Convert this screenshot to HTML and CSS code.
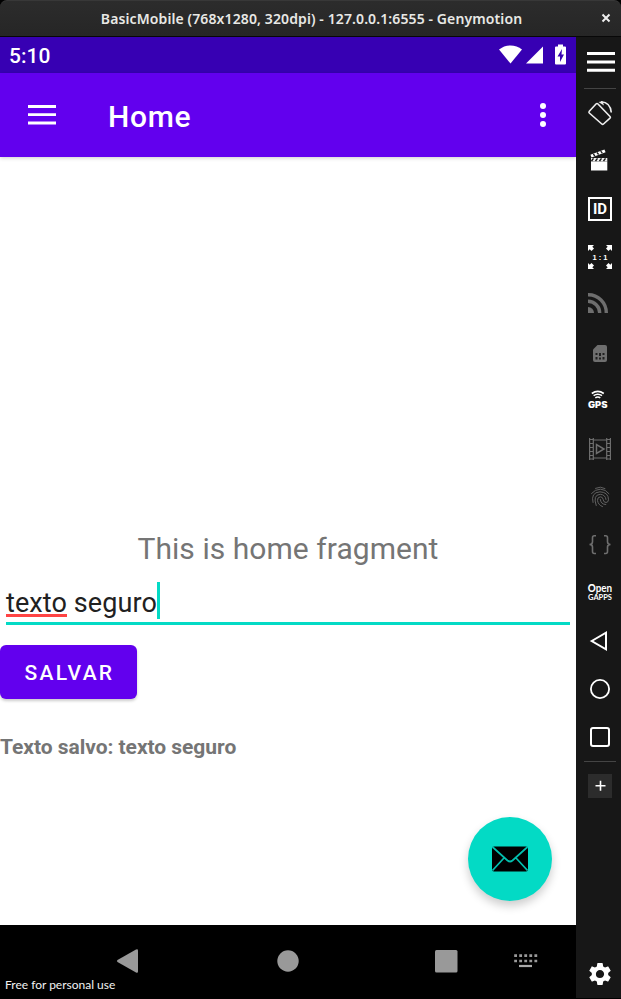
FILE: index.html
```html
<!DOCTYPE html>
<html lang="pt">
<head>
<meta charset="utf-8">
<title>BasicMobile</title>
<link rel="stylesheet" href="styles.css">
</head>
<body>
<div class="window">
  <header class="titlebar">
    <span class="window-title">BasicMobile (768x1280, 320dpi) - 127.0.0.1:6555 - Genymotion</span>
    <svg class="close" viewBox="0 0 10 10"><path d="M1.500 1.500l7 7M8.500 1.500l-7 7"/></svg>
  </header>
  <div class="workspace">
    <div class="device">
      <div class="statusbar">
        <span class="clock">5:10</span>
        <svg class="status-icons" width="70" height="22" viewBox="0 0 70 22">
          <path d="M1 5.500C7.500 0 17.500 0 24 5.500L12.500 19.500z"/>
          <path d="M28 19.500L45 2.500V19.500z"/>
          <path fill-rule="evenodd" d="M60 0.500h5v2h2q1 0 1 1v16q0 1-1 1h-9q-1 0-1-1v-16q0-1 1-1h2zM64 5l-4.500 7.500h2.500v5.500l4-7.500h-2.500z"/>
        </svg>
      </div>
      <div class="appbar">
        <svg class="menu" width="28" height="20" viewBox="0 0 28 20"><path d="M0 1.500h28M0 9.700h28M0 18h28"/></svg>
        <h1>Home</h1>
        <svg class="more" width="6" height="24" viewBox="0 0 6 24"><circle cx="3" cy="3" r="3"/><circle cx="3" cy="12" r="3"/><circle cx="3" cy="21" r="3"/></svg>
      </div>
      <main class="content">
        <p class="intro">This is home fragment</p>
        <div class="field"><span class="misspelled">texto</span><span class="rest">&nbsp;seguro</span><span class="caret"></span></div>
        <button class="save">SALVAR</button>
        <p class="saved">Texto salvo: texto seguro</p>
        <div class="fab">
          <svg width="36" height="26" viewBox="0 0 36 26"><rect y=".5" width="36" height="25" rx="2"/><path d="M.5 1L15.500 14.500q2.500 2 5 0L35.500 1M.5 24.500L12 12M35.500 24.500L24 12"/></svg>
        </div>
      </main>
      <nav class="navbar">
        <svg width="576" height="73" viewBox="0 0 576 73">
          <path d="M117.500 35L136 24.600q2-.8 2 1v21q0 1.800-2 1L117.500 37q-1.200-1 0-2z"/>
          <circle cx="288" cy="36" r="10.700"/>
          <rect x="435" y="25" width="22.500" height="22.500" rx="1.500"/>
          <path class="keys" d="M514.200 30.700h23M514.200 36h23"/>
          <path class="space" d="M519 41h13"/>
        </svg>
        <span class="license">Free for personal use</span>
      </nav>
    </div>
    <aside class="toolbar">
      <div class="tool tool-menu"><svg class="wide" width="28" height="22" viewBox="0 0 28 22"><path d="M0 2.500h28M0 11h28M0 19.300h28" stroke="#fff" stroke-width="3"/></svg></div>
      <div class="tool ruled"><svg viewBox="0 0 24 24"><g fill="none" stroke="#eee" stroke-width="1.600"><path d="M1.300 10.200L8 3q1-1 2 0L22 15.500q.8.800 0 1.600L15.500 23q-.9.800-1.700 0L1.300 12q-.8-.9 0-1.800z"/><path d="M13 .8Q22.500 1.500 23.300 11.500"/></g><path d="M10.500 1L14.500.2 16 4.500z" fill="#eee"/></svg></div>
      <div class="tool"><svg viewBox="0 0 24 24"><path d="M3 12.500h16.300v9H3z" fill="#fff"/><path d="M3 9h16.300v3.500H3z" fill="#eee"/><path d="M5.500 9.300l-2 2.700M9.500 9.300l-2 2.700M13.500 9.300l-2 2.700M17.500 9.300l-2 2.700" stroke="#171717" stroke-width="1.400"/><path d="M3 7.200L17 1.800" stroke="#fff" stroke-width="3"/><path d="M5.300 5l1.600 2M9 3.500l1.600 2M12.700 2.200l1.600 2" stroke="#171717" stroke-width="1.300"/></svg></div>
      <div class="tool"><svg viewBox="0 0 24 24"><rect x="1" y="1" width="22" height="22" fill="none" stroke="#fff" stroke-width="2"/><text class="id" x="12" y="17.300">ID</text></svg></div>
      <div class="tool"><svg viewBox="0 0 24 24"><g fill="#fff"><path id="corner" d="M0 0h6L4.300 1.700 6 3.500 3.500 6 1.700 4.300 0 6z"/><use href="#corner" transform="matrix(-1 0 0 1 24 0)"/><use href="#corner" transform="matrix(1 0 0 -1 0 24)"/><use href="#corner" transform="matrix(-1 0 0 -1 24 24)"/></g><text class="ratio" x="12" y="15">1 : 1</text></svg></div>
      <div class="tool"><svg viewBox="0 0 24 24"><g fill="none" stroke="#6e6e6e" stroke-width="3.400"><path d="M0 1.700A18 18 0 0 1 18.300 20"/><path d="M0 8.300A11.700 11.700 0 0 1 11.700 20"/></g><path d="M0 14a6 6 0 0 1 6 6H0z" fill="#6e6e6e"/></svg></div>
      <div class="tool"><svg viewBox="0 0 24 24"><path d="M9.500 4H17q2 0 2 2v13q0 2-2 2H7q-2 0-2-2V8.500z" fill="#6e6e6e"/><path d="M7.500 12h2v2h-2zM11 12h2v3h-2zM14.500 12h2v2h-2zM7.500 16h2v2.500h-2zM11 16.500h2v2h-2zM14.500 16h2v2.500h-2z" fill="#202020"/></svg></div>
      <div class="tool"><svg viewBox="0 0 24 24"><g fill="none" stroke="#fff" stroke-width="1.600"><path d="M3.800 4.500q6-4.200 12 0M5.600 6.700q4.200-3 8.400 0M7.300 8.800q2.500-1.700 5 0"/></g><text class="gps" x="0" y="19" textLength="19.500" lengthAdjust="spacingAndGlyphs">GPS</text></svg></div>
      <div class="tool"><svg viewBox="0 0 24 24"><g fill="none" stroke="#6e6e6e" stroke-width="1.200"><path d="M1.600 1v22M5.300 1v22M18.700 1v22M22.400 1v22M5 3h14M5 21h14"/><path d="M2 2.500h3M2 6.500h3M2 10.500h3M2 14.500h3M2 18.500h3M2 22h3M19 2.500h3M19 6.500h3M19 10.500h3M19 14.500h3M19 18.500h3M19 22h3"/><path d="M8.500 7.500v9l7.500-4.500z" stroke-width="1.500"/></g></svg></div>
      <div class="tool"><svg viewBox="0 0 24 24"><g fill="none" stroke="#626262" stroke-width="1" stroke-linecap="round"><path d="M7.500 3.300q5-2.500 9.500.2M3.500 8.500Q7 4.200 12.500 4.200q5 0 8.500 4.500M5 17.500Q2.500 7.500 12 6.800q8.500.5 8.500 8-.3 2.700-2.500 2.700-2.700-.2-2.800-3-.5-2.700-2.900-2.700-3 .4-2.800 3.600.5 4.500 5 6.200M8.200 20.500Q4.500 9.700 12.300 9.300q5.200.4 5.700 5.200M12.300 14.500q.5 5 5.500 5"/></g></svg></div>
      <div class="tool"><svg viewBox="0 0 24 24"><g fill="none" stroke="#6e6e6e" stroke-width="1.600"><path d="M8 2.700H6.300Q4.500 2.700 4.500 4.700v4q0 2.800-3 2.800 3 0 3 2.500v4.500q0 2 1.800 2H8M16 2.700h1.700q1.800 0 1.800 2v4q0 2.800 3 2.800-3 0-3 2.500v4.500q0 2-1.800 2H16"/></g></svg></div>
      <div class="tool"><svg viewBox="0 0 24 24"><text class="open" x="-.3" y="11" textLength="24.500" lengthAdjust="spacingAndGlyphs"><tspan class="strong">O</tspan>pen</text><text class="gapps" x="0" y="19" textLength="24" lengthAdjust="spacingAndGlyphs">GAPPS</text></svg></div>
      <div class="tool"><svg viewBox="0 0 24 24"><path d="M3.700 12L18 3.700v16.600z" fill="none" stroke="#fff" stroke-width="2"/></svg></div>
      <div class="tool"><svg viewBox="0 0 24 24"><circle cx="12" cy="12" r="9.100" fill="none" stroke="#fff" stroke-width="1.800"/></svg></div>
      <div class="tool"><svg viewBox="0 0 24 24"><rect x="3" y="3" width="18" height="18" rx="2" fill="none" stroke="#fff" stroke-width="2"/></svg></div>
      <div class="tool ruled add"><svg viewBox="0 0 24 24"><path d="M0 0h24v24H0z" fill="#2c2c2c"/><path d="M7.500 11.800h10M12.500 6.800v10" stroke="#fff" stroke-width="1.600"/></svg></div>
      <div class="tool settings"><svg viewBox="1.500 1.500 21 21"><path fill="#fff" d="M19.140 12.940c.04-.3.060-.61.060-.94s-.02-.64-.07-.94l2.030-1.580a.49.490 0 0 0 .12-.61l-1.920-3.320a.488.488 0 0 0-.59-.22l-2.390.96c-.5-.38-1.030-.7-1.620-.94l-.36-2.540a.484.484 0 0 0-.48-.41h-3.840c-.24 0-.43.17-.47.410l-.36 2.540c-.59.240-1.130.570-1.620.940l-2.390-.96c-.22-.08-.47 0-.59.220L2.740 8.870c-.12.210-.08.470.120.610l2.030 1.580c-.05.300-.09.630-.09.940s.02.640.070.940l-2.030 1.580a.49.490 0 0 0-.12.610l1.920 3.320c.12.220.370.290.590.220l2.390-.96c.5.380 1.030.7 1.620.940l.36 2.540c.05.240.240.410.480.410h3.840c.24 0 .44-.17.470-.41l.36-2.540c.59-.24 1.130-.56 1.620-.94l2.390.96c.22.080.470 0 .59-.22l1.920-3.320c.12-.22.070-.47-.12-.61l-2.010-1.580zM12 15.600A3.610 3.610 0 0 1 8.400 12c0-1.980 1.620-3.600 3.600-3.600s3.600 1.620 3.600 3.600-1.620 3.600-3.600 3.600z"/></svg></div>
    </aside>
  </div>
</div>
</body>
</html>
```
FILE: styles.css
```css
* { box-sizing: border-box; }
body { margin: 0; background: #000; font-family: Roboto, sans-serif; }
h1, p { margin: 0; }
svg { display: block; }

.window { width: 621px; height: 999px; display: flex; flex-direction: column; }
.titlebar {
  height: 37px; flex: none; display: grid; grid-template-columns: 1fr auto 1fr; align-items: center;
  background: linear-gradient(#2c2c2c, #262626); border-top: 1px solid #383838; border-bottom: 1px solid #080808;
  border-radius: 7px 7px 0 0;
}
.window-title {
  grid-column: 2; color: #e8e8e5; white-space: nowrap; letter-spacing: .11px;
  font: 600 14px/20px "Noto Sans", sans-serif; margin-left: 2px;
}
.close { width: 10px; height: 10px; justify-self: end; margin: -2px 10px 0 0; fill: none; stroke: #eee; stroke-width: 2; }
.workspace { flex: 1; display: flex; min-height: 0; }
.device { width: 576px; display: flex; flex-direction: column; }

.statusbar {
  height: 36px; flex: none; padding: 0 8px 0 9px; display: flex; align-items: center; justify-content: space-between;
  background: #3700b3; color: #fff;
}
.clock { font: 500 21px/36px Roboto, sans-serif; padding-top: 2px; }
.status-icons { fill: #fff; }
.appbar {
  height: 84px; flex: none; padding: 0 30px 0 28px; display: flex; align-items: center;
  background: #6200ee; color: #fff; box-shadow: 0 1px 4px #0003; z-index: 1;
}
.menu { stroke: #fff; stroke-width: 2.800; }
.appbar h1 { margin: 3px 0 0 52px; font: 500 30px/36px Roboto, sans-serif; letter-spacing: .7px; }
.more { margin-left: auto; fill: #fff; }

.content { height: 768px; flex: none; background: #fff; position: relative; padding-top: 374px; }
.intro { text-align: center; font-size: 30px; line-height: 36px; letter-spacing: .05px; color: #757575; }
.field {
  height: 43px; margin: 15px 6px 0; display: flex; align-items: flex-start; border-bottom: 3px solid #03dac5;
  font-size: 27px; line-height: 37px; letter-spacing: .1px; color: #212121;
}
.misspelled { height: 35px; line-height: 43px; border-bottom: 3px solid #ff4444; }
.rest { line-height: 43px; }
.caret { width: 3px; height: 37px; background: #03dac5; }
.save {
  display: block; width: 137px; height: 54px; margin-top: 19.500px; padding: 3px 0 0 2px; border: 0; border-radius: 6px;
  background: #6200ee; color: #fff; font: 500 21px/50px Roboto, sans-serif; letter-spacing: 2.300px;
  box-shadow: 0 2px 3px #0003;
}
.saved { margin-top: 34.500px; font-size: 21px; line-height: 28px; font-weight: 700; letter-spacing: -.04px; color: #757575; }
.fab {
  position: absolute; right: 24px; bottom: 24px; width: 84px; height: 84px; border-radius: 50%;
  display: grid; place-items: center; background: #03dac5; box-shadow: 0 5px 10px #0003;
}
.fab path { fill: none; stroke: #03bfae; stroke-width: 1.700; }

.navbar { height: 73px; flex: none; position: relative; background: #000; }
.navbar svg { fill: #999; }
.navbar .keys { stroke: #999; stroke-width: 2.700; stroke-dasharray: 2.800 2.250; fill: none; }
.navbar .space { stroke: #aaa; stroke-width: 2.200; }
.license { position: absolute; left: 5px; bottom: 5px; color: #f2f2f2; font: 12px/16px Lato, sans-serif; white-space: nowrap; }

.toolbar { flex: 1; display: flex; flex-direction: column; background: #171717; margin-bottom: 1px; }
.tool { position: relative; width: 48px; height: 48px; padding: 12px; flex: none; }
.tool svg { width: 24px; height: 24px; overflow: visible; }
.tool-menu { height: 52px; padding: 14px 0 0 11px; }
.tool svg.wide { width: 28px; height: 22px; }
.ruled::before { content: ""; position: absolute; left: 8px; top: -1px; width: 32px; height: 1px; background: #444; }
.add { margin-top: 1px; }
.settings { margin-top: auto; }
.tool text { fill: #fff; }
.id { font: 700 14px "Noto Sans", sans-serif; text-anchor: middle; }
.tool .id { font-family: Roboto, sans-serif; font-size: 15px; }
.ratio { font: 700 7.500px "Liberation Sans", sans-serif; text-anchor: middle; }
.gps { font: 900 8.700px Inter, sans-serif; }
.open { font: 700 10.500px Lato, sans-serif; }
.strong { font-weight: 900; }
.gapps { font: 700 7.800px Lato, sans-serif; }
```
